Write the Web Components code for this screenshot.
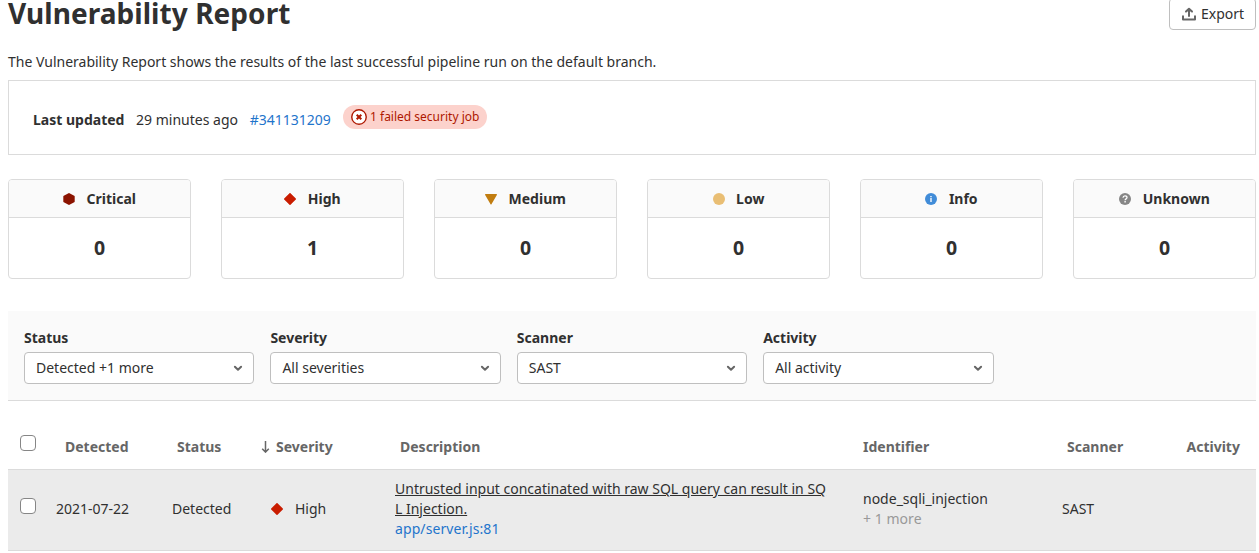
<!DOCTYPE html>
<html lang="en">
<head>
<meta charset="utf-8">
<title>Vulnerability Report</title>
<style>
body{margin:0;background:#fff;color:#303030;font:14px/20px "Noto Sans",sans-serif;overflow:hidden}
</style>
</head>
<body>
<vulnerability-report></vulnerability-report>
<script>
const define = (name, css, html) => customElements.define(name, class extends HTMLElement {
  constructor() {
    super();
    const t = document.createElement('template');
    t.innerHTML = `<style>*{box-sizing:border-box}:host{box-sizing:border-box}${css}</style>` + (typeof html === 'function' ? html(this) : html);
    this.attachShadow({mode: 'open'}).append(t.content.cloneNode(true));
  }
});

const ICONS = {
  critical: '<svg viewBox="0 0 12 12" width="12" height="12"><path fill="#8b1300" d="M5.5.15a1 1 0 0 1 1 0l4.7 2.55a1 1 0 0 1 .5.87v4.86a1 1 0 0 1-.5.87l-4.7 2.55a1 1 0 0 1-1 0L.8 9.3a1 1 0 0 1-.5-.87V3.57a1 1 0 0 1 .5-.87z"/></svg>',
  high: '<svg viewBox="0 0 12 12" width="12" height="12"><path fill="#c91c00" d="M5.5.2a.7.7 0 0 1 1 0l5.3 5.3a.7.7 0 0 1 0 1l-5.3 5.3a.7.7 0 0 1-1 0L.2 6.5a.7.7 0 0 1 0-1z"/></svg>',
  medium: '<svg viewBox="0 0 12 12" width="12" height="12"><path fill="#c17d10" d="M.7 1h10.6a.65.65 0 0 1 .55 1L6.6 10.9a.7.7 0 0 1-1.2 0L.15 2A.65.65 0 0 1 .7 1z"/></svg>',
  low: '<svg viewBox="0 0 12 12" width="12" height="12"><circle cx="6" cy="6" r="6" fill="#e9be74"/></svg>',
  info: '<svg viewBox="0 0 12 12" width="12" height="12"><circle cx="6" cy="6" r="6" fill="#418cd8"/><path fill="#fff" d="M5.2 3h1.6v1.3H5.2zM5.2 5h1.6v4H5.2z" opacity=".85"/></svg>',
  unknown: '<svg viewBox="0 0 12 12" width="12" height="12"><circle cx="6" cy="6" r="6" fill="#868686"/><path fill="none" stroke="#fff" stroke-width="1.3" d="M4 4.7C4.1 3.4 5 2.8 6 2.8c1.2 0 2 .7 2 1.7 0 1.4-1.9 1.3-1.9 2.8"/><path fill="#fff" d="M5.4 8.1h1.4v1.4H5.4z"/></svg>',
  chevron: '<svg viewBox="0 0 16 16" width="16" height="16"><path fill="none" stroke="#666" stroke-width="2" stroke-linecap="round" stroke-linejoin="round" d="M4.9 6.8 8 9.8l3.1-3"/></svg>',
  export: '<svg viewBox="0 0 16 16" width="16" height="16"><path fill="none" stroke="#666" stroke-width="2" stroke-linecap="round" stroke-linejoin="round" d="M8 10V3.2M5 5.6 8 2.8l3 2.8"/><path fill="none" stroke="#666" stroke-width="2" stroke-linecap="round" stroke-linejoin="round" d="M2 10.2v3.3h12v-3.3"/></svg>',
  failed: '<svg viewBox="0 0 16 16" width="16" height="16"><circle cx="8" cy="8" r="7.25" fill="#fff" stroke="#ae1800" stroke-width="1.4"/><path stroke="#ae1800" stroke-width="2" d="m5.7 5.7 4.6 4.6m0-4.6-4.6 4.6"/></svg>',
  sort: '<svg viewBox="0 0 9 12" width="9" height="12"><path fill="none" stroke="#666" stroke-width="1.5" d="M4.5 0v11M1.2 7.8l3.3 3.3 3.3-3.3"/></svg>'
};

define('ui-icon', ':host{display:inline-flex;flex:none}svg{display:block}', el => ICONS[el.getAttribute('name')]);

define('ui-button', `
:host{display:flex;align-items:center;height:32px;width:87px;padding:0 0 0 12px;border:1px solid #bfbfbf;border-radius:4px;gap:4px;background:#fff}
ui-icon{margin-left:-1px}`,
'<ui-icon name="export"></ui-icon><span><slot></slot></span>');

define('page-header', `
:host{display:flex;justify-content:space-between;align-items:center;height:32px;margin-top:-2px}
h1{margin:-2px 0 0;font-size:28px;line-height:32px;font-weight:700;letter-spacing:.06px}`,
'<h1><slot></slot></h1><ui-button>Export</ui-button>');

define('failed-badge', `
:host{display:flex;align-items:center;height:24px;padding:0 8px;border-radius:12px;background:#fcd2cc;color:#ae1800;font-size:12px;line-height:16px;gap:3.5px}`,
'<ui-icon name="failed"></ui-icon><slot></slot>');

define('pipeline-status', `
:host{display:flex;align-items:center;height:75px;margin-top:8px;padding:4px 24px 0;border:1px solid #dbdbdb;gap:11.7px}
b{font-weight:700}a{color:#1f75cb}failed-badge{margin-bottom:5px}`,
'<b>Last updated</b><span>29 minutes ago</span><a>#341131209</a><failed-badge>1 failed security job</failed-badge>');

define('severity-card', `
:host{display:flex;flex-direction:column;height:100px;border:1px solid #dbdbdb;border-radius:4px;overflow:hidden;text-align:center;font-weight:700}
header{display:flex;align-items:center;justify-content:center;gap:11.5px;height:38px;background:#fafafa;border-bottom:1px solid #dbdbdb}
div{flex:1;display:flex;align-items:center;justify-content:center;font-size:19.5px}`,
el => `<header><ui-icon name="${el.getAttribute('icon')}"></ui-icon><span><slot></slot></span></header><div>${el.getAttribute('count')}</div>`);

define('severity-cards', ':host{display:grid;grid-template-columns:repeat(6,1fr);gap:30px;margin-top:24px}', '<slot></slot>');

define('filter-select', `
:host{display:block;flex:none;width:230.4px}
label{display:block;font-weight:700;margin-bottom:4px}
div{display:flex;align-items:center;justify-content:space-between;height:32px;padding:0 7px 0 11px;border:1px solid #bfbfbf;border-radius:4px;background:#fff}`,
el => `<label>${el.getAttribute('label')}</label><div><span><slot></slot></span><ui-icon name="chevron"></ui-icon></div>`);

define('filter-bar', ':host{display:flex;gap:16px;height:90px;margin-top:32px;padding:17px 16px 0;background:#fafafa;border-bottom:1px solid #dbdbdb}', '<slot></slot>');

define('check-box', ':host{display:block;width:16px;height:16px;border:1px solid #868686;border-radius:4px;background:#fff}', '');

define('table-row', `
:host{display:grid;grid-template-columns:36px 116px 98px 125px 468px 199px 124.5px 69.5px;align-items:center;height:81px;padding-left:12px;border-bottom:1px solid #dbdbdb}
:host([head]){height:69px;color:#666;font-weight:700;padding-top:24px}
:host(:not([head])){background:#ebebeb;padding-bottom:2px}
::slotted(check-box){margin-bottom:6px}
:host([head]) ::slotted(check-box){margin-bottom:8px}`,
'<slot></slot>');

define('table-cell', `
:host{display:block}
:host([inset]){padding-left:5px}
:host([inset=wide]){padding-left:9px}
:host([severity]){display:flex;align-items:center;gap:12px;padding-left:1px}
:host([sorted]){display:flex;align-items:center;gap:6px;margin-left:-9px}`,
'<slot></slot>');

define('finding-title', `
:host{display:block;width:433px;word-break:break-all}
a{display:block;color:#1f75cb;letter-spacing:.09px}`,
'<u><slot></slot></u><a><slot name="file"></slot></a>');

define('muted-text', ':host{display:block;color:#999;letter-spacing:.04px}', '<slot></slot>');

define('vulnerability-report', `
:host{display:block;width:1248px;margin-left:8px;padding-top:.02px}
p{margin:22px 0 0}`,
`<page-header>Vulnerability Report</page-header>
<p>The Vulnerability Report shows the results of the last successful pipeline run on the default branch.</p>
<pipeline-status></pipeline-status>
<severity-cards>
<severity-card icon="critical" count="0">Critical</severity-card>
<severity-card icon="high" count="1">High</severity-card>
<severity-card icon="medium" count="0">Medium</severity-card>
<severity-card icon="low" count="0">Low</severity-card>
<severity-card icon="info" count="0">Info</severity-card>
<severity-card icon="unknown" count="0">Unknown</severity-card>
</severity-cards>
<filter-bar>
<filter-select label="Status">Detected +1 more</filter-select>
<filter-select label="Severity">All severities</filter-select>
<filter-select label="Scanner">SAST</filter-select>
<filter-select label="Activity">All activity</filter-select>
</filter-bar>
<table-row head>
<check-box></check-box>
<table-cell inset="wide">Detected</table-cell>
<table-cell inset>Status</table-cell>
<table-cell sorted><ui-icon name="sort"></ui-icon><span>Severity</span></table-cell>
<table-cell inset>Description</table-cell>
<table-cell>Identifier</table-cell>
<table-cell inset>Scanner</table-cell>
<table-cell>Activity</table-cell>
</table-row>
<table-row>
<check-box></check-box>
<table-cell>2021-07-22</table-cell>
<table-cell>Detected</table-cell>
<table-cell severity><ui-icon name="high"></ui-icon><span>High</span></table-cell>
<finding-title>Untrusted input concatinated with raw SQL query can result in SQL Injection.<span slot="file">app/server.js:81</span></finding-title>
<table-cell>node_sqli_injection<muted-text>+ 1 more</muted-text></table-cell>
<table-cell>SAST</table-cell>
<table-cell></table-cell>
</table-row>`);
</script>
</body>
</html>
